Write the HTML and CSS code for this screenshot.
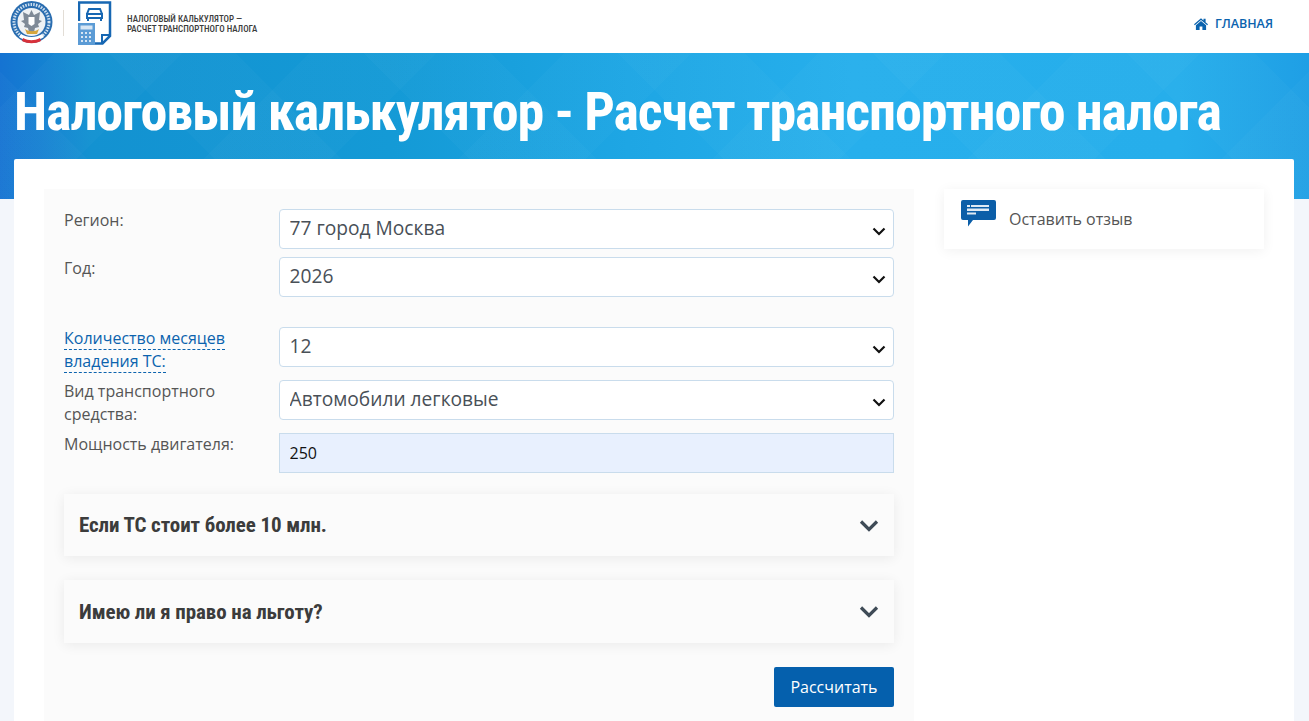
FILE: index.html
```html
<!DOCTYPE html>
<html lang="ru">
<head>
    <meta charset="UTF-8">
    <meta name="viewport" content="width=device-width, initial-scale=1.0">
    <title>Налоговый калькулятор</title>
    <link rel="stylesheet" href="styles.css">
</head>
<body>
    <header class="topbar">
        <div class="brand">
            <svg class="emblem" width="43" height="46" viewBox="0 0 43 46">
                <circle cx="21.500" cy="22" r="21" fill="#2a6db0"/>
                <circle cx="21.500" cy="22" r="17.500" fill="none" stroke="#cfe0f0" stroke-width="3" stroke-dasharray="1.500 1.200"/>
                <circle cx="21.500" cy="22" r="14" fill="#eef1f4"/>
                <path d="M21.500 10l2.500 5 6-3-1 8 3 1-4 3 1 3-4 1-1 4h-5l-1-4-4-1 1-3-4-3 3-1-1-8 6 3z" fill="#7f8a97"/>
                <path d="M18.500 17h6v7l-3 2-3-2z" fill="#fff"/>
                <path d="M15 29c4 3 10 3 14 0l-2 5h-10z" fill="#d6a63c"/>
                <path d="M9 37c8 5 17 5 25 0l-2-3c-6 4-15 4-21 0z" fill="#fff"/>
                <path d="M12 41c6 3 13 3 19 0l-1-3c-6 3-11 3-17 0z" fill="#d8313a"/>
            </svg>
            <span class="brand-sep"></span>
            <svg class="doc-icon" width="34" height="44" viewBox="0 0 34 44">
                <path d="M1 20V1.500h31V35l-7.500 7.500H15" fill="none" stroke="#1767b3" stroke-width="2.500"/>
                <path d="M24 42v-8h8" fill="none" stroke="#1767b3" stroke-width="2"/>
                <path d="M9 17v-4l2-5h11l2 5v4zM8 13h17M10 17v3M23 17v3" fill="none" stroke="#1767b3" stroke-width="2"/>
                <rect x="0" y="22" width="17" height="22" fill="#5b9bd5"/>
                <rect x="2.500" y="24.500" width="12" height="4" fill="#d7e6f4"/>
                <path d="M3 31h2v2H3zM7 31h2v2H7zM11 31h2v2h-2zM3 35h2v2H3zM7 35h2v2H7zM11 35h2v2h-2zM3 39h2v2H3zM7 39h2v2H7zM11 39h2v2h-2z" fill="#d7e6f4"/>
            </svg>
            <div class="brand-text">НАЛОГОВЫЙ КАЛЬКУЛЯТОР —<br>РАСЧЕТ ТРАНСПОРТНОГО НАЛОГА</div>
        </div>
        <a class="home-link" href="#">
            <svg width="14" height="12" viewBox="0 0 14 12">
                <path d="M7 0.300L0 6.200l.8 1L7 2.100l6.200 5.100.8-1L11.600 4.200V.8H9.500v1.600z" fill="#0b63ae"/>
                <path d="M7 3.100L1.900 7.300V12h3.700V8.400h2.800V12h3.700V7.300z" fill="#0b63ae"/>
            </svg>
            ГЛАВНАЯ
        </a>
    </header>

    <section class="hero">
        <h1>Налоговый калькулятор - Расчет транспортного налога</h1>
    </section>

    <main class="card">
        <form class="calc-form">
            <div class="row">
                <label>Регион:</label>
                <select class="field"><option>77 город Москва</option></select>
            </div>
            <div class="row">
                <label>Год:</label>
                <select class="field"><option>2026</option></select>
            </div>
            <div class="row row-spaced">
                <label><span class="hint">Количество месяцев владения ТС:</span></label>
                <select class="field"><option>12</option></select>
            </div>
            <div class="row">
                <label>Вид транспортного средства:</label>
                <select class="field"><option>Автомобили легковые</option></select>
            </div>
            <div class="row">
                <label>Мощность двигателя:</label>
                <input class="field field-filled" type="text" value="250">
            </div>

            <div class="acc first">
                <span>Если ТС стоит более 10 млн.</span>
                <svg width="20" height="13" viewBox="0 0 20 13"><path d="M2 2.500l8 8 8-8" fill="none" stroke="#3f4b57" stroke-width="3.200"/></svg>
            </div>
            <div class="acc">
                <span>Имею ли я право на льготу?</span>
                <svg width="20" height="13" viewBox="0 0 20 13"><path d="M2 2.500l8 8 8-8" fill="none" stroke="#3f4b57" stroke-width="3.200"/></svg>
            </div>

            <div class="actions">
                <button class="calc-btn" type="button">Рассчитать</button>
            </div>
        </form>

        <aside class="side">
            <a class="feedback" href="#">
                <svg width="35" height="27" viewBox="0 0 35 27">
                    <path d="M2 0h31a2 2 0 0 1 2 2v16a2 2 0 0 1-2 2H12l-5 6.500V20H2a2 2 0 0 1-2-2V2a2 2 0 0 1 2-2z" fill="#0b5ea8"/>
                    <path d="M6 5h3v2H6zM10 5h18v2H10zM6 8.500h22v2.500H6zM6 12.500h9v2H6z" fill="#dfeaf4"/>
                </svg>
                <span>Оставить отзыв</span>
            </a>
        </aside>
    </main>
</body>
</html>
```

FILE: styles.css
```css
* {
    box-sizing: border-box;
}
html, body {
    height: 100%;
}
body {
    margin: 0;
    overflow: hidden;
    font-family: "Open Sans", sans-serif;
    font-size: 16px;
    color: #555;
    background-color: #f3f6fb;
}

/* Top bar */
.topbar {
    height: 53px;
    padding: 0 36px 0 10px;
    background: #fff;
    display: flex;
    justify-content: space-between;
    align-items: flex-start;
}
.brand {
    display: flex;
    align-items: center;
    height: 46px;
}
.brand-sep {
    width: 1px;
    height: 26px;
    margin: 0 14px 0 10px;
    background: #e2ddd6;
}
.brand-text {
    margin: 2px 0 0 15px;
    font-family: "Roboto", sans-serif;
    font-stretch: 75%;
    font-size: 9px;
    font-weight: 500;
    line-height: 10.500px;
    color: #3c3c3c;
    white-space: nowrap;
}
.home-link {
    margin-top: 15px;
    display: flex;
    align-items: center;
    gap: 7px;
    font-size: 12.500px;
    font-weight: 600;
    color: #0b63ae;
    text-decoration: none;
}

/* Blue hero */
.hero {
    height: 146px;
    padding: 26px 14px 0;
    background-color: #1c9fdd;
    background-image:
        repeating-linear-gradient(45deg, rgba(255,255,255,0.018) 0 90px, rgba(0,0,0,0) 90px 180px),
        repeating-linear-gradient(-45deg, rgba(255,255,255,0.018) 0 90px, rgba(0,0,0,0) 90px 180px),
        linear-gradient(90deg, #1573d2 0, #1392d1 7%, #149ad6 30%, #1ea6e4 48%, #27afec 65%, #26aeeb 90%, #1f9fe5 100%);
}
.hero h1 {
    margin: 0;
    font-family: "Roboto", sans-serif;
    font-stretch: 75%;
    font-size: 54px;
    font-weight: 700;
    letter-spacing: -1.100px;
    line-height: 66px;
    color: #fff;
    white-space: nowrap;
}

/* White card */
.card {
    margin: -40px 15px 0 14px;
    height: 562px;
    padding: 30px 30px 0;
    overflow: hidden;
    background: #fff;
    border-radius: 2px 2px 0 0;
    display: flex;
    align-items: flex-start;
    gap: 30px;
}
.calc-form {
    width: 870px;
    flex-shrink: 0;
    padding: 20px;
    background: #fbfbfb;
}
.row {
    display: grid;
    grid-template-columns: 215px 1fr;
    margin-bottom: 8px;
}
.row-spaced {
    margin-top: 30px;
    margin-bottom: 7px;
}
.row-spaced + .row {
    margin-bottom: 7px;
}
.row label {
    line-height: 23px;
    padding-right: 30px;
}
.hint {
    color: #0b63ae;
    border-bottom: 1px dashed #0b63ae;
}
.field {
    width: 100%;
    height: 40px;
    padding: 0 10px 4px 9.500px;
    border: 1px solid #c9dcec;
    border-radius: 4px;
    font-family: "Open Sans", sans-serif;
    font-size: 19.200px;
    color: #495057;
    background-color: #fff;
}
select.field {
    appearance: none;
    padding-right: 30px;
    background-image: url("data:image/svg+xml,%3Csvg xmlns='http://www.w3.org/2000/svg' width='14' height='9' viewBox='0 0 14 9'%3E%3Cpath d='M1.500 1.500L7 7l5.500-5.500' fill='none' stroke='%23111' stroke-width='2.200'/%3E%3C/svg%3E");
    background-repeat: no-repeat;
    background-position: right 7px top 17px;
}
.field-filled {
    padding-bottom: 0;
    font-size: 16px;
    color: #111;
    background-color: #e8f0fe;
    border-radius: 0;
}

/* Accordion headers */
.acc {
    height: 63px;
    margin-top: 24px;
    padding: 0 15px;
    background: #fbfbfb;
    box-shadow: 0 2px 12px rgba(0, 0, 0, 0.07);
    display: flex;
    justify-content: space-between;
    align-items: center;
    font-family: "Roboto", sans-serif;
    font-stretch: 75%;
    font-size: 21px;
    font-weight: 700;
    letter-spacing: -0.100px;
    color: #3c3c3c;
}
.acc.first {
    height: 62px;
    margin-top: 21px;
}
.actions {
    margin-top: 24px;
    display: flex;
    justify-content: flex-end;
}
.calc-btn {
    width: 120px;
    height: 40px;
    border: none;
    border-radius: 2px;
    background: #0560ad;
    color: #fff;
    font-family: "Open Sans", sans-serif;
    font-size: 16px;
}

/* Side */
.side {
    width: 320px;
}
.feedback {
    height: 60px;
    padding: 11px 17px;
    background: #fff;
    box-shadow: 0 2px 12px rgba(0, 0, 0, 0.06);
    display: flex;
    align-items: flex-start;
    gap: 13px;
    color: #555;
    text-decoration: none;
}
.feedback span {
    margin-top: 8px;
}
```
